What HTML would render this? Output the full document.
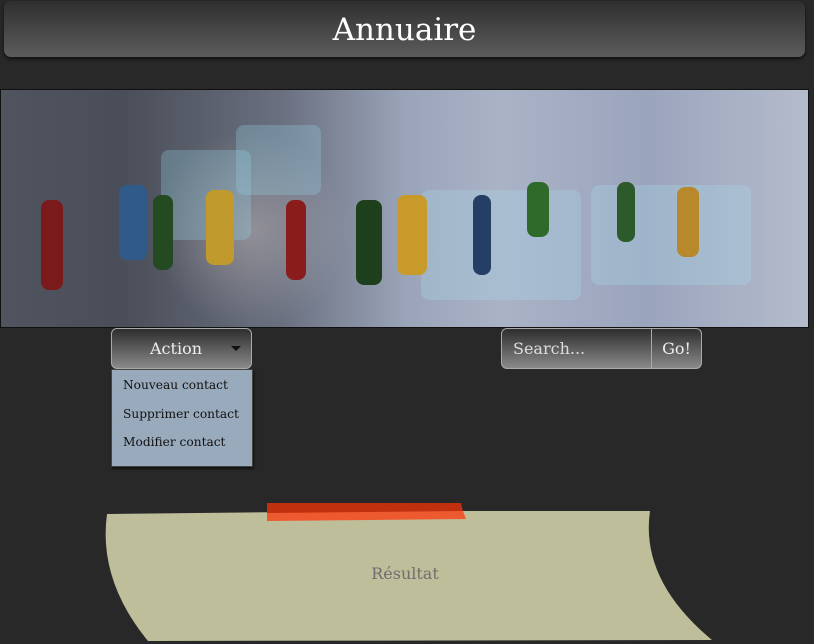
<!DOCTYPE html>
<html><head><style>
body{margin:0;width:814px;height:644px;background:#282828;overflow:hidden;position:relative;font-family:"DejaVu Serif","Liberation Serif",serif}
.hdr{position:absolute;left:4px;top:1px;width:801px;height:56px;border-radius:7px;background:linear-gradient(#2f2f2f,#5c5c5c);box-shadow:0 2px 3px #111;color:#fff;font-size:31px;text-align:center;line-height:58px}
.ban{position:absolute;left:0;top:89px;width:809px;height:239px;border:1px solid #111;box-sizing:border-box;overflow:hidden;
background:linear-gradient(90deg,#50545e 0%,#4a4e58 15%,#6a7080 35%,#9aa4b8 50%,#aab2c6 62%,#9aa4bc 80%,#b4bccc 100%)}
.blob{position:absolute;border-radius:8px}
.act{position:absolute;left:111px;top:328px;width:141px;height:41px;border:1px solid #aaa;border-radius:6px;box-sizing:border-box;background:linear-gradient(#2e2e2e,#8a8a8a);color:#eee;font-size:16px;line-height:39px;padding-left:38px}
.act:after{content:"";position:absolute;right:10px;top:17px;border:5px solid transparent;border-top:5px solid #111}
.menu{position:absolute;left:111px;top:369px;width:142px;height:98px;background:#99aabd;border:1px solid #444;box-sizing:border-box;box-shadow:1px 2px 2px #111;font-size:12.2px;color:#111}
.menu div{position:absolute;left:11px}
.srch{position:absolute;left:501px;top:328px;width:151px;height:41px;border:1px solid #aaa;border-right:1px solid #ccc;border-radius:6px 0 0 6px;box-sizing:border-box;background:linear-gradient(#2e2e2e,#8a8a8a);color:#ddd;font-size:16px;line-height:39px;padding-left:11px}
.go{position:absolute;left:651px;top:328px;width:51px;height:41px;border:1px solid #aaa;border-radius:0 6px 6px 0;box-sizing:border-box;background:linear-gradient(#2e2e2e,#8a8a8a);color:#eee;font-size:16px;line-height:39px;text-align:center}
</style></head><body>
<div class="hdr">Annuaire</div>
<div class="ban">
<div class="blob" style="left:150px;top:40px;width:200px;height:200px;background:radial-gradient(circle,rgba(200,190,190,.45),rgba(200,190,190,0) 70%)"></div>
<div class="blob" style="left:160px;top:60px;width:90px;height:90px;background:rgba(150,210,230,.3)"></div>
<div class="blob" style="left:235px;top:35px;width:85px;height:70px;background:rgba(150,210,230,.3)"></div>
<div class="blob" style="left:420px;top:100px;width:160px;height:110px;background:rgba(170,220,235,.3)"></div>
<div class="blob" style="left:590px;top:95px;width:160px;height:100px;background:rgba(170,220,235,.3)"></div>
<div class="blob" style="left:40px;top:110px;width:22px;height:90px;background:#7a1a1a"></div>
<div class="blob" style="left:118px;top:95px;width:28px;height:75px;background:#2f5a8a"></div>
<div class="blob" style="left:152px;top:105px;width:20px;height:75px;background:#244a22"></div>
<div class="blob" style="left:205px;top:100px;width:28px;height:75px;background:#c09a2c"></div>
<div class="blob" style="left:285px;top:110px;width:20px;height:80px;background:#8a1c1c"></div>
<div class="blob" style="left:355px;top:110px;width:26px;height:85px;background:#1e3f1c"></div>
<div class="blob" style="left:396px;top:105px;width:30px;height:80px;background:#c89a2a"></div>
<div class="blob" style="left:472px;top:105px;width:18px;height:80px;background:#253e66"></div>
<div class="blob" style="left:526px;top:92px;width:22px;height:55px;background:#2f6a2a"></div>
<div class="blob" style="left:616px;top:92px;width:18px;height:60px;background:#2c5a2a"></div>
<div class="blob" style="left:676px;top:97px;width:22px;height:70px;background:#b8892a"></div>
</div>
<div class="act">Action</div>
<div class="menu"><div style="top:8px">Nouveau contact</div><div style="top:37px">Supprimer contact</div><div style="top:65px">Modifier contact</div></div>
<div class="srch">Search...</div>
<div class="go">Go!</div>
<svg style="position:absolute;left:0;top:0" width="814" height="644">
<path d="M107 514 L380 511 L650 511 Q640 580 712 640 L148 641 Q98 580 107 514 Z" fill="#bebe9a"/>
<path d="M267 503 L461 503 L463 512 L267 514 Z" fill="#c0300e"/>
<path d="M267 513 L463 511 L466 519 L267 521 Z" fill="#ee5a30"/>
<text x="405" y="579" text-anchor="middle" font-family="DejaVu Serif,serif" font-size="16" fill="#6e6e6e">Résultat</text>
</svg>
</body></html>
